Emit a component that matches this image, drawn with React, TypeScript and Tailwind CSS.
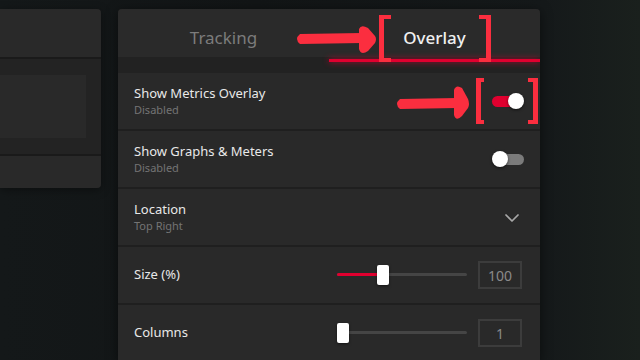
import { ChevronDown } from 'lucide-react'

type ToggleRowProps = {
  title: string
  sub: string
  on: boolean
}

function Toggle({ on }: { on: boolean }) {
  return (
    <div className="relative h-[16px] w-[32px]">
      <div
        className={
          on
            ? 'absolute left-0 top-[2.5px] h-[11px] w-[30px] rounded-full bg-[#e0002f]'
            : 'absolute right-0 top-[2.5px] h-[11px] w-[30px] rounded-full bg-[#7b7b7b]'
        }
      />
      <div
        className={
          on
            ? 'absolute right-0 top-0 h-[16px] w-[16px] rounded-full bg-white shadow-[0_1px_3px_rgba(0,0,0,0.6)]'
            : 'absolute left-0 top-0 h-[16px] w-[16px] rounded-full bg-white shadow-[0_1px_3px_rgba(0,0,0,0.6)]'
        }
      />
    </div>
  )
}

function ToggleRow({ title, sub, on }: ToggleRowProps) {
  return (
    <div className="flex h-[56px] items-center justify-between bg-[#292929] pl-[16px] pr-[16px]">
      <div className="flex flex-col">
        <span className="text-[13px] leading-[18px] text-[#e8e8e8]">{title}</span>
        <span className="text-[11px] leading-[16px] text-[#747474]">{sub}</span>
      </div>
      <Toggle on={on} />
    </div>
  )
}

function SliderRow({ label, pct, value }: { label: string; pct: number; value: string }) {
  return (
    <div className="flex h-[56px] items-center bg-[#292929] pl-[16px] pr-[18px]">
      <span className="w-[203px] text-[13px] text-[#e8e8e8]">{label}</span>
      <div className="relative h-[20px] w-[130px]">
        <div className="absolute left-0 right-0 top-[8px] h-[3px] rounded-full bg-[#454545]" />
        <div
          className="absolute left-0 top-[8px] h-[3px] rounded-full bg-[#e0002f]"
          style={{ width: `${pct}%` }}
        />
        <div
          className="absolute top-0 h-[20px] w-[12px] rounded-[2px] bg-white shadow-[0_1px_3px_rgba(0,0,0,0.5)]"
          style={{ left: `calc(${pct}% - ${pct === 0 ? 0 : 6}px)` }}
        />
      </div>
      <div className="ml-auto flex h-[28px] w-[44px] items-center justify-center border-2 border-[#3c3c3c] text-[14px] text-[#8a8a8a]">
        {value}
      </div>
    </div>
  )
}

function Annotations() {
  return (
    <svg className="pointer-events-none absolute inset-0" width="640" height="360" viewBox="0 0 640 360">
      <g fill="#fb2e3f" stroke="none">
        {/* arrow to Overlay tab */}
        <path d="M300 34 L362 33 L362 43 L300 44 Q294 39 300 34 Z" />
        <path d="M359 29 Q361 24 368 28 L375 36 Q377 39 375 43 L368 51 Q361 56 359 49 Z" />
        {/* brackets around tab */}
        <rect x="379" y="15" width="5" height="47" />
        <rect x="379" y="15" width="12" height="4" />
        <rect x="379" y="58" width="12" height="4" />
        <rect x="486" y="15" width="5" height="47" />
        <rect x="479" y="15" width="12" height="4" />
        <rect x="479" y="58" width="12" height="4" />
        {/* arrow to toggle */}
        <path d="M400 99 L457 98 L457 108 L400 109 Q394 104 400 99 Z" />
        <path d="M454 90 Q456 84 462 88 L468 99 Q470 104 468 108 L462 116 Q456 122 454 115 Z" />
        {/* brackets around toggle */}
        <rect x="476" y="78" width="5" height="46" />
        <rect x="476" y="78" width="8" height="4" />
        <rect x="476" y="120" width="8" height="4" />
        <rect x="533" y="78" width="5" height="46" />
        <rect x="528" y="78" width="10" height="4" />
        <rect x="528" y="120" width="10" height="4" />
      </g>
    </svg>
  )
}

export default function App() {
  return (
    <div
      className="relative h-[360px] w-[640px] overflow-hidden bg-[linear-gradient(90deg,#141819_0%,#121516_40%,#15191a_85%,#1a201d_100%)]"
      style={{ fontFamily: '"Noto Sans", "Open Sans", sans-serif' }}
    >
      <div className="flex items-start gap-[17px] pt-[9px]">
        {/* left panel */}
        <div className="flex w-[101px] flex-col gap-[2px] overflow-hidden rounded-r-[4px] bg-[#1a1a1a] shadow-[0_2px_10px_rgba(0,0,0,0.4)]">
          <div className="h-[48px] bg-[#292929]" />
          <div className="bg-[#232323] pb-[16px] pr-[15px] pt-[16px]">
            <div className="h-[63px] bg-[#292929]" />
          </div>
          <div className="h-[32px] bg-[#292929]" />
        </div>

        {/* right panel */}
        <div className="flex w-[422px] flex-col overflow-hidden rounded-t-[4px] bg-[#1f1f1f] shadow-[0_2px_12px_rgba(0,0,0,0.5)]">
          <div className="flex h-[48px] bg-[#2a2a2a] pt-[9px]">
            <div className="flex flex-1 items-center justify-center text-[17px] text-[#7c7c7c]">Tracking</div>
            <div className="flex flex-1 items-center justify-center text-[17px] font-medium text-[#f0f0f0]">Overlay</div>
          </div>
          <div className="h-[16px] bg-[#222222] pt-[2px]">
            <div className="ml-auto h-[3px] w-1/2 bg-[#e0002f] shadow-[0_0_6px_rgba(235,0,50,0.8)]" />
          </div>
          <div className="flex flex-col gap-[2px]">
            <ToggleRow title="Show Metrics Overlay" sub="Disabled" on />
            <ToggleRow title="Show Graphs & Meters" sub="Disabled" on={false} />
            <div className="flex h-[56px] items-center justify-between bg-[#292929] pl-[16px] pr-[16px]">
              <div className="flex flex-col">
                <span className="text-[13px] leading-[18px] text-[#e8e8e8]">Location</span>
                <span className="text-[11px] leading-[16px] text-[#747474]">Top Right</span>
              </div>
              <ChevronDown className="mt-[2px] h-[24px] w-[24px] text-[#a8a8a8]" strokeWidth={1.75} />
            </div>
            <SliderRow label="Size (%)" pct={35} value="100" />
            <SliderRow label="Columns" pct={0} value="1" />
          </div>
        </div>
      </div>
      <Annotations />
    </div>
  )
}
